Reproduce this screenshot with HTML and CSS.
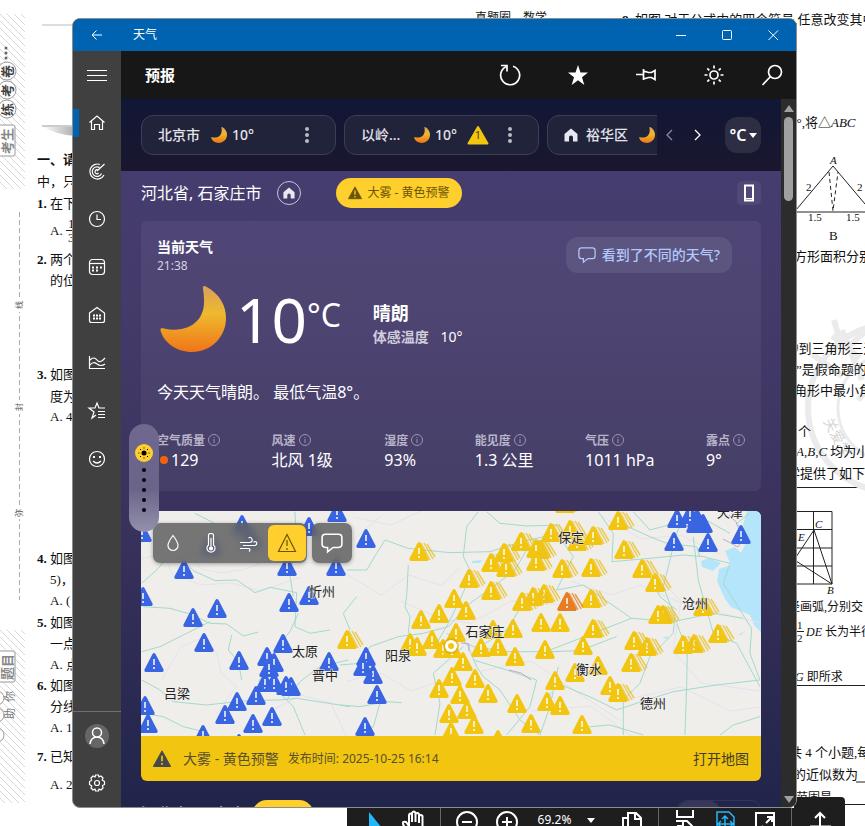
FILE: index.html
```html
<!DOCTYPE html>
<html lang="zh-CN">
<head>
<meta charset="utf-8">
<title>天气</title>
<link rel="stylesheet" href="styles.css">
</head>
<body>
<svg class="paper" width="865" height="826" viewBox="0 0 865 826">
  <defs>
    <pattern id="stripes" width="7" height="7" patternUnits="userSpaceOnUse"><path d="M-1-1L8 8M-1 6L1 8M6-1L8 1" stroke="#d9d9d9" stroke-width="1"/></pattern>
    <linearGradient id="fade" x1="0" x2="1"><stop offset="0" stop-color="#fff"/><stop offset="1" stop-color="#aaa"/></linearGradient>
  </defs>
  <path d="M0 14h25v175H0zM0 630h25v173H0z" fill="url(#stripes)"/>
  <path d="M42 25h34" stroke="#ddd" stroke-width="2"/>
  <path d="M42 126h34v10q-20-1-34-10z" fill="url(#fade)"/>
  <path d="M42 126h34" stroke="#ccc" stroke-width="2"/>
  <g fill="#fff" stroke="#999"><circle cx="7" cy="71" r="9"/><circle cx="7" cy="90" r="9"/><circle cx="7" cy="109" r="9"/><rect x="-6" y="125" width="21" height="31" rx="2"/><rect x="-6" y="651" width="21" height="31" rx="2"/><circle cx="-3" cy="698" r="7"/><circle cx="-3" cy="715" r="7"/><circle cx="-3" cy="735" r="7"/></g>
  <g fill="#666"><circle cx="6" cy="48" r="1.5"/><circle cx="6" cy="53" r="1.5"/><circle cx="6" cy="58" r="1.5"/></g>
  <g class="turned">
    <text transform="translate(12 78) rotate(-90)">卷</text><text transform="translate(12 97) rotate(-90)">考</text><text transform="translate(12 116) rotate(-90)">练</text>
    <text class="gray" transform="translate(12 154) rotate(-90)">考生</text>
    <text class="gray" transform="translate(12 680) rotate(-90)">题目</text>
  </g>
  <g class="margin-note"><text transform="translate(14 719) rotate(-90)">助</text><text transform="translate(14 702) rotate(-90)">你</text></g>
  <path d="M19.500 212v388" stroke="#aaa" stroke-dasharray="5 3"/>
  <path d="M19.500 298v14M19.500 400v14M19.500 505v14" stroke="#fff" stroke-width="3"/>
  <g class="seam"><text transform="translate(22 309) rotate(-90)">线</text><text transform="translate(22 411) rotate(-90)">封</text><text transform="translate(22 517) rotate(-90)">弥</text></g>
  <g class="exam">
    <text x="37" y="164" class="strong">一、请仔细</text><text x="37" y="186">中，只有</text>
    <text x="37" y="208"><tspan class="strong">1.</tspan> 在下列</text><text x="50" y="235">A.</text><text x="68" y="228">1</text><text x="68" y="242">3</text><path d="M66 230.500h10" stroke="#222"/>
    <text x="37" y="264"><tspan class="strong">2.</tspan> 两个</text><text x="50" y="285">的位置</text>
    <text x="37" y="379"><tspan class="strong">3.</tspan> 如图</text><text x="50" y="401">度为</text><text x="50" y="421">A. 40</text>
    <text x="37" y="563"><tspan class="strong">4.</tspan> 如图</text><text x="50" y="584">5)，则</text><text x="50" y="605">A. (</text>
    <text x="37" y="627"><tspan class="strong">5.</tspan> 如图</text><text x="50" y="648">一点</text><text x="50" y="669">A. 点</text>
    <text x="37" y="690"><tspan class="strong">6.</tspan> 如图</text><text x="50" y="711">分线</text><text x="50" y="732">A. 1</text>
    <text x="37" y="761"><tspan class="strong">7.</tspan> 已知</text><text x="50" y="789">A. 2</text>
    <text x="475" y="22" class="small">真题圈　数学</text>
    <text x="622" y="24"><tspan class="strong">8.</tspan> 如图,对于公式中的四个符号,任意改变其中</text>
    <text x="790" y="127">0°,将△<tspan class="it">ABC</tspan></text>
    <text x="794" y="261">方形面积分别</text>
  </g>
  <g class="figure">
    <path d="M796 212H865M796 210L833 166L865 204"/><path d="M829 172L833 211L838 172" stroke-dasharray="4 3"/>
    <path d="M796 487.500H865M796 511.500H832V584H796M796 529.500H832M813.500 511v73M796 548h36M796 566h36M814 530L832 584L796 561M796 557L814 530M796 685.500H865M856 782h9M845 804.500h20"/>
  </g>
  <g class="stamp"><circle cx="892" cy="408" r="84"/><circle cx="892" cy="408" r="54" class="thin"/><path d="M834 320l5 18M812 354l30 22M832 336l28 22M842 330l20 50M850 345l20-18M858 400l12-14"/><text transform="translate(823 421) rotate(62)">关爱学</text></g>
  <g class="exam">
    <text x="830" y="164" class="it tiny">A</text><text x="806" y="191" class="tiny">2</text><text x="857" y="191" class="tiny">2</text><text x="808" y="221" class="tiny">1.5</text><text x="846" y="221" class="tiny">1.5</text><text x="829" y="240">B</text>
    <text x="792" y="353">∂到三角形三边</text><text x="796" y="374">”是假命题的</text><text x="794" y="395">角形中最小角</text><text x="798" y="436">个</text>
    <text x="796" y="456"><tspan class="it">A,B,C</tspan> 均为小</text><text x="787" y="478">学提供了如下面</text>
    <text x="815" y="528" class="it tiny">C</text><text x="798" y="541" class="it tiny">E</text><text x="827" y="594" class="it tiny">B</text>
    <text x="788" y="611" class="small">径画弧,分别交 A</text><text x="797" y="629" class="tiny">1</text><text x="797" y="642" class="tiny">2</text><path d="M796 631.500h8" stroke="#222"/><text x="806" y="636" class="small"><tspan class="it">DE</tspan> 长为半径</text>
    <text x="795" y="681" class="small"><tspan class="it">G</tspan> 即所求</text><text x="789" y="757">共 4 个小题,每</text><text x="793" y="779">的近似数为</text><text x="796" y="802" class="small">范围是</text>
  </g>
</svg>

<svg class="sprite" width="0" height="0">
  <defs>
    <linearGradient id="moonfill" x1="0" y1="0" x2="0" y2="1"><stop offset="0" stop-color="#d9a05a"/><stop offset=".42" stop-color="#efb92e"/><stop offset="1" stop-color="#f07418"/></linearGradient>
    <symbol id="moon" viewBox="0 0 66 66"><path d="M43 3Q42-1 46 .5C60 8 66 20 66 32C66 51 51 66 32 66C17 66 4 57 .5 44.500Q0 41 4 42.500C22 47 45 40 44 14Q44 8 43 3Z" fill="url(#moonfill)"/></symbol>
    <symbol id="dots" viewBox="0 0 6 18"><g fill="#b9bac4"><circle cx="3" cy="3" r="2"/><circle cx="3" cy="9" r="2"/><circle cx="3" cy="15" r="2"/></g></symbol>
    <symbol id="house" viewBox="0 0 14 14"><path d="M7 0.500L13.500 6v7.500H9V9.500a2 2 0 0 0-4 0v4H.500V6Z" fill="#e8e8ee"/></symbol>
    <symbol id="info" viewBox="0 0 12 12"><g fill="none" stroke="#9a93b2"><circle cx="6" cy="6" r="5.500"/><path d="M6 5v4M6 3v1"/></g></symbol>
    <symbol id="bubble" viewBox="0 0 20 20"><path d="M4 2h12q3 0 3 3v6q0 3-3 3h-5l-5 4v-4H4q-3 0-3-3V5q0-3 3-3Z" fill="none" stroke="currentColor" stroke-width="1.400"/></symbol>
    <symbol id="warn" viewBox="0 0 16 16"><path d="M8 1L15.500 14.500H.500Z" fill="currentColor" stroke="currentColor" stroke-linejoin="round"/><path d="M8 5v5M8 11.500v1.500" stroke="var(--mark)" stroke-width="1.500"/></symbol>
  </defs>
</svg>

<div class="viewer-bar">
  <button aria-label="选择"><svg width="24" height="24"><path d="M7 2v20l5-4h8Z" fill="#22b8ff"/></svg></button>
  <button aria-label="手形"><svg width="24" height="24"><path d="M5 22L1 14q-1-3 3-2l3 4V5q1-3 3 0v7V3q2-3 3.500 0v9V4q2-2 3.500 0v9V6q2-2 3.500 0v16" class="ln"/></svg></button>
  <i></i>
  <button aria-label="缩小"><svg width="24" height="24"><circle cx="12" cy="12" r="10" class="ln"/><path d="M7 12h10" class="ln"/></svg></button>
  <button aria-label="放大"><svg width="24" height="24"><circle cx="12" cy="12" r="10" class="ln"/><path d="M7 12h10M12 7v10" class="ln"/></svg></button>
  <button class="zoom">69.2%<span class="caret"></span></button>
  <button aria-label="页面"><svg width="24" height="24"><path d="M8 24V3h8l5 5v16M15 3v6h6M8 8H3v16" class="ln"/></svg></button>
  <i></i>
  <button aria-label="分割"><svg width="24" height="24"><path d="M4 0v7h16V0M3 11h11l5 5v8M5 24V16h5v-5" class="ln"/></svg></button>
  <button aria-label="适合页面" class="on"><svg width="24" height="24"><path d="M4 24V2h12l5 5v17M12 6v12M6 14h14M9 9l3-3 3 3M8 11l-3 3 3 3M17 11l3 3-3 3" class="ln thin"/></svg></button>
  <button aria-label="全屏"><svg width="24" height="24"><path d="M3 24V3h18v21M14 7h5v5M18 8l-5 5M5 16v6M6 20l4-4" class="ln"/></svg></button>
  <i></i>
  <button class="share" aria-label="共享"><svg width="24" height="24"><path d="M12 16V3M7 8l5-5 5 5M2 16.500h20v6" class="ln"/></svg></button>
</div>

<div class="window">
  <header class="titlebar">
    <button class="back" aria-label="返回"><svg width="12" height="12"><path d="M11 6H1M5.500 1.500L1 6l4.500 4.500"/></svg></button>
    <span class="name">天气</span>
    <button aria-label="最小化"><svg width="12" height="12"><path d="M1 6.500h10"/></svg></button>
    <button aria-label="最大化"><svg width="12" height="12"><rect x="1.500" y="1.500" width="9" height="9" rx="1"/></svg></button>
    <button aria-label="关闭"><svg width="12" height="12"><path d="M1.500 1.500l9.500 9.500M11 1.500L1.500 11"/></svg></button>
  </header>
  <div class="body">
    <nav class="rail">
      <button aria-label="菜单"><svg width="20" height="20"><path d="M0 5.500h20M0 10.500h20M0 15.500h20"/></svg></button>
      <button class="current" aria-label="预报"><svg width="20" height="20"><path d="M2.500 9.500L10 3l7.500 6.500M4.500 8.500v8h3v-5h5v5h3v-8"/></svg></button>
      <button aria-label="地图"><svg width="20" height="20"><path d="M13 3.500A7.500 7.500 0 1 0 17 14M12.500 6.500A4.800 4.800 0 1 0 14.500 12.500M11 9a2 2 0 1 0 .5 3M10 10l7.500-7"/></svg></button>
      <button aria-label="每小时预报"><svg width="20" height="20"><circle cx="10" cy="10" r="7.500"/><path d="M10 5.500V10.500h4"/></svg></button>
      <button aria-label="每月预报"><svg width="20" height="20"><rect x="2.500" y="2.500" width="15" height="15" rx="3"/><path d="M3 6.500h14"/><path d="M5 10.500h10M5 13.500h7" stroke-width="2" stroke-dasharray="2 2"/></svg></button>
      <button aria-label="花粉"><svg width="20" height="20"><path d="M2.500 8L10 2.500 17.500 8v7.500q0 2-2 2h-11q-2 0-2-2Z"/><path d="M6 10.500h9M6 13.500h9" stroke-width="2" stroke-dasharray="2 1"/></svg></button>
      <button aria-label="历史天气"><svg width="20" height="20"><path d="M2.500 3v12.500H18M3 7q4-4 7 0t8-2M3 12q3-4 7-1t8 0"/></svg></button>
      <button aria-label="收藏夹"><svg width="20" height="20"><path d="M18 7h-6L10 2 8 7H2l5 4-2 6 4-3M11 10.500h7M11 13.500h7M11 16.500h7"/></svg></button>
      <button aria-label="反馈"><svg width="20" height="20"><circle cx="10" cy="10" r="7.500"/><path d="M6 12q4 4 8 0"/><path d="M6 8h2M12 8h2" stroke-width="2"/></svg></button>
      <span class="fill"></span>
      <button class="account" aria-label="帐户"><svg width="24" height="24"><circle cx="12" cy="12" r="12"/><path d="M5 20q1-7 7-7t7 7"/><circle cx="12" cy="8.500" r="4.500" class="head"/></svg></button>
      <button aria-label="设置"><svg width="20" height="20"><circle cx="10" cy="10" r="2.500"/><path d="M8 4L8.500 2h3L12 4l2-1 2 2-.8 2 2.300 1.500v3L15.500 12.500 16 15l-2 2-2-1-.5 2h-3L8 16l-2 1-2-2 .8-2L2.500 11.500v-3L4.500 7.500 4 5l2-2Z"/></svg></button>
    </nav>
    <div class="page">
      <div class="appbar">
        <h1>预报</h1>
        <button aria-label="刷新"><svg width="24" height="24"><path d="M15 3.200a9.500 9.500 0 1 1-7 .5M3 2.500h6v6"/></svg></button>
        <button aria-label="收藏"><svg width="24" height="24"><path d="M12 2l2.500 7.500H22l-6 4.700 2.300 7.800L12 17.300 5.700 22 8 14.200 2 9.500h7.500Z" fill="#fff" stroke="none"/></svg></button>
        <button aria-label="固定"><svg width="24" height="24"><path d="M2 11.500h7M9.500 6v11M9.500 8l5 1.500h3l3.500-2v9l-3.500-2h-3l-5 1.500" /></svg></button>
        <button aria-label="主题"><svg width="24" height="24"><circle cx="12" cy="12" r="4"/><path d="M12 2.500v3M12 18.500v3M2.500 12h3M18.500 12h3M5.300 5.300l2 2M16.700 16.700l2 2M5.300 18.700l2-2M16.700 7.300l2-2"/></svg></button>
        <button class="search" aria-label="搜索"><svg width="24" height="24"><circle cx="15" cy="9" r="6.500"/><path d="M10.500 13.500L2.500 22"/></svg></button>
      </div>
      <div class="scroller">
        <main>
          <section class="places">
            <div class="chips">
              <div class="chip"><span class="city">北京市</span><svg class="sm-moon"><use href="#moon"/></svg><span class="deg">10°</span><button aria-label="更多"><svg width="6" height="18"><use href="#dots"/></svg></button></div>
              <div class="chip"><span class="city">以岭...</span><svg class="sm-moon"><use href="#moon"/></svg><span class="deg">10°</span><span class="count"><svg width="22" height="20"><path d="M11 2L20.500 18.500H1.500Z"/></svg><b>1</b></span><button aria-label="更多"><svg width="6" height="18"><use href="#dots"/></svg></button></div>
              <div class="chip"><svg class="sm-house"><use href="#house"/></svg><span class="city">裕华区</span><svg class="sm-moon"><use href="#moon"/></svg></div>
            </div>
            <button class="arrow dim" aria-label="上一个"><svg width="8" height="12"><path d="M7 1L2 6l5 5"/></svg></button>
            <button class="arrow" aria-label="下一个"><svg width="8" height="12"><path d="M1 1l5 5-5 5"/></svg></button>
            <button class="unit">°C<span class="caret"></span></button>
          </section>
          <section class="location">
            <h2>河北省, 石家庄市</h2>
            <button class="home" aria-label="主位置"><svg width="12" height="12"><use href="#house"/></svg></button>
            <button class="alert"><svg width="14" height="14"><use href="#warn"/></svg>大雾 - 黄色预警</button>
            <button class="phone" aria-label="手机"><svg width="12" height="18"><path d="M2 1.500h8v15H2Z"/><path d="M2 14.500h8" stroke-width="1"/></svg></button>
          </section>
          <section class="now">
            <div class="top">
              <div><h3>当前天气</h3><time>21:38</time></div>
              <button class="feedback"><svg width="18" height="18"><use href="#bubble"/></svg>看到了不同的天气?</button>
            </div>
            <div class="current-row">
              <svg class="big-moon"><use href="#moon"/></svg>
              <span class="temp">10</span><span class="scale">°C</span>
              <div class="cond"><strong>晴朗</strong><span>体感温度 <em>10°</em></span></div>
            </div>
            <p>今天天气晴朗。 最低气温8°。</p>
            <dl>
              <div><dt>空气质量<svg><use href="#info"/></svg></dt><dd><i class="aqi"></i>129</dd></div>
              <div><dt>风速<svg><use href="#info"/></svg></dt><dd>北风 1级</dd></div>
              <div><dt>湿度<svg><use href="#info"/></svg></dt><dd>93%</dd></div>
              <div><dt>能见度<svg><use href="#info"/></svg></dt><dd>1.3 公里</dd></div>
              <div><dt>气压<svg><use href="#info"/></svg></dt><dd>1011 hPa</dd></div>
              <div><dt>露点<svg><use href="#info"/></svg></dt><dd>9°</dd></div>
            </dl>
          </section>
          <section class="map">
            <svg class="canvas" viewBox="0 0 620 225" preserveAspectRatio="xMidYMid slice">
              <defs>
                <path id="tri" d="M-1.500-9Q0-11 1.500-9L9.500 6.500Q10 9 8 9H-8Q-10 9-9.500 6.500Z"/>
                <path id="ex" d="M0-4v6M0 4v2" stroke="#fff" stroke-width="1.500" fill="none"/>
                <g id="b"><use href="#tri" fill="#3964e2"/><use href="#ex"/></g>
                <g id="y"><use href="#tri" fill="#f2c511"/><use href="#ex"/></g>
                <path id="bars" d="M2-9L11 8M5-9L14 7M8-8L16 5" stroke-width="1.500" opacity=".75"/>
                <g id="h"><use href="#bars" stroke="#ecc021"/><use href="#y"/></g>
                <g id="o"><use href="#bars" stroke="#e67d22"/><use href="#tri" fill="#e67d22"/><use href="#ex"/></g>
              </defs>
              <rect width="620" height="225" fill="#efeeeb"/>
              <g fill="#b4e5fb"><path d="M606 0H620V121L613 114 609 104 590 96 584 88 576 70 578 58 590 54 584 40 594 36 600 42 606 30 602 14Z"/><path d="M560 50l8-3 12 5-8 8-11-4ZM331 50l10-1-2 3-8 0ZM521 127l6-2-1 3ZM597 124l7-4-4 4ZM407 184l4-4-2 7Z"/></g>
              <g class="minor">
                <path d="M0 48L24 42 44 34 60 58 80 62 105 58 130 48 170 52 210 30 240 5M24 42L30 62 60 74 90 72 120 80 160 66M80 162L76 142 58 128 40 136 20 170M80 162L96 175 74 205M130 200L160 184 190 192 205 225M200 60L240 84 268 64 300 74 318 58M212 6L250 14 280 0M206 170L240 162 270 180 300 170M260 90L300 108 330 112 370 90 420 94M340 160L390 150 440 184 480 210M430 70L470 84 500 74 540 92 620 112M500 50L540 90 532 140 560 172 620 180M460 5L500 28 540 24 580 44M480 190L540 176 590 200 620 196M390 200L450 195 490 225"/>
              </g>
              <g class="roads">
                <g transform="scale(.3333) translate(-33 -33)"><path d="M195 40L250 68 300 100M35 250L85 205 130 150 190 212 255 242 320 240 375 278 420 262 500 278 495 380 540 400 600 390M40 320L120 325 180 342 240 370 290 372 340 408 385 396M35 455L90 440 160 405 240 365M305 405L295 450 325 485 335 540M495 35L500 150 478 215 490 290M385 545L420 500 440 440 480 395 505 340M440 570L490 620 525 705M35 540L90 570 130 605 230 615 350 602 450 600 500 595 660 620M40 640L100 650 160 680 220 695M470 600L510 545 570 500 655 480"/></g>
                <g transform="scale(.3333) translate(597 -33)"><path d="M20 210L80 210 110 160 135 120 205 145 330 158 450 155 545 125 655 100M440 35L480 70 560 78 660 75M415 35L380 80 370 170 395 220 360 300 325 370 290 430M200 290L195 320 210 350 205 400M205 195L200 290M0 495L60 490 90 440 175 410 250 400 325 380 390 310 460 260 525 210 560 150M0 615L60 620 140 605 185 608M50 290L10 340 30 390M320 400L400 440 500 455 655 455M380 430L410 500 430 530 480 570 540 660 600 705M370 440L280 520 300 610 285 705M400 480L500 510 590 540 570 620 500 705M655 500L630 620 600 705M120 610L100 680 70 700M550 310L500 390 420 440"/></g>
                <g transform="scale(.3333) translate(1227 -33)"><path d="M145 35L190 100 186 185 300 175 400 165 460 170 540 190M190 60L300 110 350 130 440 140 450 170M0 70L70 170 20 270 100 255 245 355 370 365 490 340 580 355M245 355L0 450M410 35L380 100 340 260 375 350 370 400 300 470 270 550 220 600 220 705M0 455L90 452 160 425 200 410M250 35L300 90 450 50 540 100M430 110L445 240 490 400 560 430 630 560M540 190L520 250 570 330 605 385 600 460 630 540M380 370L412 450 410 560 405 705M0 540L130 595 200 630 290 600 370 575 500 555 630 540M120 680L180 675 280 705M510 705L550 675 630 650M280 190L330 290 380 330M600 40L560 70 580 130"/></g>
              </g>
              <path d="M368 159l12 3 10 7M320 132l8 1v7M595 12l10 12-8 12-15-8M596 12l-8-8" fill="none" stroke="#c4a4d2"/>
              <g class="pins">
                <use href="#b" x="43" y="59"/><use href="#b" x="196" y="2"/><use href="#b" x="101" y="14"/><use href="#b" x="168" y="16"/><use href="#b" x="2" y="86"/><use href="#b" x="1" y="22"/><use href="#b" x="146" y="56"/><use href="#b" x="195" y="56"/><use href="#b" x="76" y="98"/><use href="#b" x="52" y="107"/><use href="#b" x="148" y="92"/><use href="#b" x="168" y="85"/><use href="#b" x="63" y="132"/><use href="#b" x="13" y="152"/><use href="#b" x="98" y="150"/><use href="#b" x="142" y="133"/><use href="#b" x="188" y="151"/><use href="#b" x="126" y="146"/><use href="#b" x="133" y="152"/><use href="#b" x="128" y="157"/><use href="#b" x="124" y="172"/><use href="#b" x="133" y="172"/><use href="#b" x="150" y="176"/><use href="#b" x="145" y="175"/><use href="#b" x="115" y="185"/><use href="#b" x="96" y="191"/><use href="#b" x="84" y="204"/><use href="#b" x="112" y="213"/><use href="#b" x="131" y="206"/><use href="#b" x="4" y="195"/><use href="#b" x="7" y="213"/><use href="#b" x="62" y="224"/><use href="#b" x="98" y="233"/><use href="#b" x="70" y="35"/><use href="#b" x="110" y="28"/>
                <use href="#b" x="225" y="28"/><use href="#b" x="225" y="146"/><use href="#b" x="232" y="164"/><use href="#b" x="222" y="156"/><use href="#b" x="236" y="184"/><use href="#b" x="224" y="216"/>
                <use href="#b" x="556" y="12"/><use href="#tri" fill="#3964e2" x="562" y="13"/><use href="#tri" fill="#3964e2" x="556" y="8"/><use href="#b" x="536" y="8"/><use href="#b" x="549" y="4"/><use href="#tri" fill="#3964e2" x="555" y="13"/><use href="#b" x="533" y="31"/><use href="#b" x="567" y="32"/><use href="#b" x="600" y="24"/>
                <use href="#h" x="278" y="41"/><use href="#h" x="206" y="129"/><use href="#h" x="328" y="68"/><use href="#h" x="380" y="31"/><use href="#h" x="363" y="42"/><use href="#h" x="350" y="52"/><use href="#h" x="365" y="57"/><use href="#h" x="399" y="39"/><use href="#h" x="395" y="38"/><use href="#h" x="395" y="51"/><use href="#h" x="410" y="22"/><use href="#h" x="350" y="80"/><use href="#h" x="403" y="83"/><use href="#h" x="392" y="86"/><use href="#h" x="381" y="91"/>
                <use href="#y" x="313" y="88"/><use href="#y" x="325" y="100"/><use href="#y" x="298" y="103"/><use href="#y" x="280" y="109"/><use href="#y" x="352" y="119"/><use href="#y" x="372" y="118"/><use href="#y" x="400" y="112"/><use href="#y" x="315" y="122"/><use href="#y" x="291" y="129"/><use href="#y" x="269" y="132"/><use href="#y" x="276" y="136"/><use href="#y" x="302" y="138"/><use href="#y" x="311" y="138"/><use href="#y" x="340" y="137"/><use href="#y" x="357" y="136"/><use href="#y" x="374" y="146"/><use href="#y" x="404" y="139"/><use href="#y" x="322" y="151"/><use href="#y" x="311" y="166"/><use href="#y" x="298" y="178"/><use href="#y" x="334" y="168"/><use href="#y" x="319" y="184"/><use href="#y" x="347" y="183"/><use href="#y" x="326" y="199"/><use href="#y" x="308" y="203"/><use href="#y" x="333" y="214"/><use href="#y" x="310" y="221"/><use href="#y" x="357" y="229"/><use href="#y" x="376" y="193"/><use href="#y" x="390" y="213"/><use href="#y" x="414" y="170"/><use href="#y" x="406" y="191"/><use href="#y" x="419" y="195"/>
                <use href="#h" x="424" y="-7"/><use href="#h" x="477" y="10"/><use href="#h" x="429" y="19"/><use href="#h" x="436" y="31"/><use href="#h" x="452" y="25"/><use href="#h" x="483" y="39"/><use href="#h" x="421" y="58"/><use href="#h" x="450" y="57"/><use href="#h" x="501" y="58"/><use href="#h" x="514" y="72"/><use href="#h" x="450" y="88"/><use href="#o" x="426" y="91"/><use href="#h" x="522" y="104"/><use href="#h" x="517" y="104"/><use href="#y" x="419" y="112"/><use href="#h" x="452" y="118"/><use href="#y" x="442" y="135"/><use href="#h" x="506" y="136"/><use href="#h" x="493" y="130"/><use href="#h" x="490" y="152"/><use href="#h" x="553" y="133"/><use href="#h" x="542" y="134"/><use href="#h" x="577" y="123"/><use href="#h" x="562" y="96"/><use href="#y" x="457" y="155"/><use href="#y" x="434" y="162"/><use href="#y" x="469" y="175"/><use href="#h" x="477" y="182"/><use href="#y" x="441" y="214"/>
              </g>
              <circle cx="310" cy="135" r="8" fill="#d9a90c" opacity=".6"/><circle cx="310" cy="135" r="6" fill="#fff"/><circle cx="310" cy="135" r="3" fill="#f2c511"/>
              <g class="towns"><text x="181" y="85">忻州</text><text x="164" y="145">太原</text><text x="184" y="169">晋中</text><text x="36" y="187">吕梁</text><text x="257" y="149">阳泉</text><text x="344" y="125">石家庄</text><text x="430" y="31">保定</text><text x="554" y="97">沧州</text><text x="448" y="163">衡水</text><text x="512" y="197">德州</text><text x="589" y="6">天津</text></g>
            </svg>
            <div class="tools">
              <div>
                <button aria-label="降水"><svg width="20" height="20"><path d="M10 2.500Q5 9 5 12.500a5 5 0 0 0 10 0Q15 9 10 2.500Z"/></svg></button>
                <button aria-label="温度"><svg width="20" height="20"><path d="M7.500 12V2q0-1.500 2.500-1.500T12.500 2v10a4 4 0 1 1-5 0ZM10 5v10" /><circle cx="10" cy="15.500" r="1.500" fill="#fff"/></svg></button>
                <button aria-label="风"><svg width="20" height="20"><path d="M1 9.500h10q3-1 2-3.500t-3.500-1M4 12.500h12q2.500-1 1.500-3t-3 0M1 15.500h9q2 1 0 3"/></svg></button>
                <button class="on" aria-label="预警"><svg width="20" height="20"><path d="M10 1.500L18.500 18.500H1.500ZM10 7v6M10 15v2"/></svg></button>
              </div>
              <div><button aria-label="评论"><svg width="22" height="22"><use href="#bubble"/></svg></button></div>
            </div>
            <div class="bar"><svg width="18" height="18"><use href="#warn"/></svg><span>大雾 - 黄色预警</span><small>发布时间: 2025-10-25 16:14</small><a href="#">打开地图</a></div>
          </section>
          <section class="next"><h2>河北省, 石家庄市</h2><span class="peek"></span><span class="toggle"><i></i></span></section>
        </main>
        <div class="scrollbar"><span class="up"></span><span class="thumb"></span><span class="down"></span></div>
      </div>
    </div>
  </div>
</div>
<div class="float"><svg width="18" height="18"><circle cx="9" cy="9" r="9" fill="#ffcf2d"/><circle cx="9" cy="9" r="2.500"/><path d="M9 3.500v1M9 13.500v1M3.500 9h1M13.500 9h1M5 5l1 1M12 12l1 1M5 13l1-1M12 6l1-1" stroke="#000"/></svg><i></i><i></i><i></i><i></i><i></i></div>
</body>
</html>
```
FILE: styles.css
```css
* { box-sizing: border-box; margin: 0; padding: 0; }
html, body { height: 100%; }
body { position: relative; overflow: hidden; background: #fff; color: #fff; font: 14px/20px "Noto Sans", "Noto Sans CJK SC", sans-serif; }
button { border: 0; background: none; color: inherit; font: inherit; display: flex; align-items: center; justify-content: center; flex: none; }
svg { flex: none; display: block; }
.sprite { position: absolute; }

/* document behind the window */
.paper { position: absolute; left: 0; top: 0; }
.exam { fill: #111; font: 13px "Liberation Serif", "Noto Sans CJK SC", serif; }
.exam .strong { font-weight: 700; }
.exam .it { font-style: italic; }
.exam .small { font-size: 12px; }
.exam .tiny { font-size: 11px; }
.turned { font: 700 13px "Noto Sans CJK SC", sans-serif; fill: #444; }
.turned .gray { fill: #888; }
.margin-note { font: 11px "Noto Sans CJK SC", sans-serif; fill: #777; }
.seam { font: 8px "Noto Sans CJK SC", sans-serif; fill: #555; }
.figure { fill: none; stroke: #222; }
.stamp { fill: none; stroke: #ebebeb; stroke-width: 6; }
.stamp .thin { stroke-width: 3; }
.stamp text { fill: #d5d5d5; stroke: none; font: 14px "Noto Sans CJK SC", sans-serif; }

/* document viewer toolbar */
.viewer-bar { position: absolute; left: 347px; right: 20px; bottom: 0; height: 18px; padding-left: 7px; display: flex; background: #1e1e1e; }
.viewer-bar button { width: 40px; height: 24px; margin-top: 2px; }
.viewer-bar i { width: 1px; margin: 0 6px; background: #666; }
.viewer-bar .zoom { width: 85px; height: 20px; font-size: 12px; gap: 16px; padding-right: 6px; }
.viewer-bar .share { flex: 1; height: 29px; margin: -11px 0 0 -4px; background: #1e1e1e; border-radius: 4px 4px 0 0; }
.viewer-bar .share svg { margin-top: 20px; }
.viewer-bar .on { color: #22b8ff; }
.ln { fill: none; stroke: currentColor; stroke-width: 2; }
.ln.thin { stroke-width: 1.5; }
.caret { border: 4px solid transparent; border-top: 5px solid #fff; border-bottom: 0; }

/* window frame */
.window { position: absolute; inset: 18px 68px 18px 72px; border: 1px solid #8d8d8d; border-radius: 8px; overflow: hidden; display: flex; flex-direction: column; background: #404040; }
.titlebar { display: flex; height: 32px; flex: none; align-items: center; background: #0063b1; }
.titlebar button { width: 46px; height: 32px; }
.titlebar .back { width: 48px; }
.titlebar .name { flex: 1; padding-left: 12px; font-size: 12px; }
.titlebar svg, .rail svg, .appbar svg, .arrow svg, .tools svg, .phone svg { fill: none; stroke: #fff; }
.body { display: flex; flex: 1; min-height: 0; }
.rail { width: 48px; flex: none; display: flex; flex-direction: column; }
.rail button { height: 48px; flex: none; }
.rail svg { stroke-width: 1.2; }
.rail .current { position: relative; }
.rail .current::before { content: ""; position: absolute; left: 0; top: 10px; width: 6px; height: 28px; background: #0063b1; }
.rail .fill { flex: 1; }
.rail .account { border-top: 1px solid #6e6e6e; }
.account circle:first-child { fill: #666; stroke: none; }
.account path, .account .head { fill: #666; stroke-width: 1.5; }
.page { flex: 1; min-width: 0; display: flex; flex-direction: column; }
.appbar { display: flex; height: 48px; flex: none; align-items: center; background: #171717; }
.appbar h1 { flex: 1; padding-left: 24px; font-size: 15px; }
.appbar button { width: 68px; height: 48px; }
.appbar svg { stroke-width: 1.7; }
.appbar .search { width: 48px; }
.scroller { flex: 1; min-height: 0; display: flex; }
main { flex: 1; min-width: 0; overflow: hidden; background: linear-gradient(#463e71, #443b6b 200px, #3b335e 400px, #22254b 700px); }

/* scroll bar */
.scrollbar { width: 15px; flex: none; background: #2c2c2c; display: flex; flex-direction: column; align-items: center; padding: 6px 0 4px; }
.up { border: 5px solid transparent; border-bottom: 7px solid #a0a0a0; border-top: 0; }
.thumb { width: 9px; height: 84px; margin-top: 5px; border-radius: 5px; background: #a0a0a0; }
.down { margin-top: auto; border: 5px solid transparent; border-top: 7px solid #a0a0a0; border-bottom: 0; }

/* saved places */
.places { display: flex; height: 72px; align-items: center; padding: 0 20px; background: linear-gradient(#111736, #1a172e); }
.chips { display: flex; flex: 1; min-width: 0; gap: 8px; overflow: hidden; }
.chip { width: 195px; height: 40px; flex: none; display: flex; align-items: center; padding: 0 14px 0 16px; border: 1px solid #3d3f56; border-radius: 12px; background: #21233b; color: #e4e4ea; font-weight: 500; }
.city { width: 53px; }
.sm-moon { width: 16px; height: 16px; margin-right: 5px; }
.sm-house { width: 14px; height: 14px; margin-right: 8px; }
.deg { width: 32px; }
.chip button { width: 28px; height: 28px; margin-left: auto; }
.count { position: relative; width: 22px; height: 20px; }
.count path { fill: #f2c511; stroke: #f2c511; stroke-width: 2; stroke-linejoin: round; }
.count b { position: absolute; inset: 0; text-align: center; font-size: 11px; font-weight: 400; color: #54460a; }
.arrow { width: 30px; height: 30px; margin-right: -1px; }
.arrow:nth-child(2) { margin-left: -3px; }
.arrow svg { stroke-width: 1.3; }
.dim { opacity: .5; }
.unit { width: 36px; height: 36px; margin-left: 13px; gap: 2px; border-radius: 12px; background: #2d2d43; font-size: 16px; font-weight: 600; }

/* location line */
.location { display: flex; align-items: center; height: 50px; padding: 7px 20px 13px; }
h2 { font-size: 16px; font-weight: 400; }
.home { width: 24px; height: 24px; margin-left: 16px; border: 1px solid #c9c6d8; border-radius: 50%; }
.alert { height: 30px; margin-left: 35px; padding: 0 12px; gap: 5px; border-radius: 15px; background: #ffcf2d; color: #6b5600; --mark: #ffcf2d; font-size: 12px; }
.phone { width: 24px; height: 24px; margin-left: auto; border-radius: 5px; background: #514879; }
.phone svg { stroke-width: 2; }

/* current weather */
.now { margin: 0 20px; padding: 16px 16px 20px; border-radius: 6px; background: rgba(255, 255, 255, .055); }
.top { display: flex; justify-content: space-between; }
h3 { font-size: 14px; }
time { display: block; font-size: 12px; line-height: 18px; color: #d6d3e0; }
.feedback { height: 36px; margin-right: 13px; padding: 0 12px; gap: 6px; border-radius: 12px; background: #5c5580; color: #b2c8fb; font-weight: 500; }
.current-row { display: flex; height: 66px; margin: 11px 0 28px; padding-left: 3px; align-items: center; }
.big-moon { width: 66px; height: 66px; }
.temp { margin-left: 10px; font-size: 62px; line-height: 66px; }
.scale { font-size: 32px; line-height: 40px; align-self: flex-start; margin-top: 9px; }
.cond { margin-left: 32px; padding-top: 12px; }
.cond strong { display: block; font-size: 18px; line-height: 24px; }
.cond span { display: block; color: #d0ccdb; font-weight: 600; line-height: 24px; }
.cond em { margin-left: 8px; font-style: normal; font-weight: 400; color: #fff; }
.now p { font-size: 16px; line-height: 24px; }
dl { display: flex; justify-content: space-between; margin-top: 28px; }
dt { display: flex; gap: 3px; font-size: 12px; line-height: 18px; font-weight: 600; color: #b9b4c8; }
dt svg { width: 12px; height: 12px; margin-top: 2px; }
dd { font-size: 16px; line-height: 21px; white-space: nowrap; }
.aqi { display: inline-block; width: 8px; height: 8px; margin: 0 3px 2px; border-radius: 50%; background: #f7630c; }

/* alert map */
.map { position: relative; margin: 20px 20px 0; border-radius: 6px; overflow: hidden; }
.canvas { width: 100%; height: 225px; }
.roads { fill: none; stroke: #a3d9cc; stroke-width: 3; stroke-linejoin: round; }
.minor { fill: none; stroke: #e4e1ec; stroke-linejoin: round; }
.towns { fill: #222; font: 13px "Noto Sans CJK SC", sans-serif; text-anchor: middle; paint-order: stroke; stroke: #efeeeb; stroke-width: 1px; }
.tools { position: absolute; left: 12px; top: 12px; display: flex; gap: 5px; }
.tools div { display: flex; padding: 2px 1px; border-radius: 7px; background: rgba(90, 90, 90, .82); backdrop-filter: blur(4px); box-shadow: 0 1px 4px rgba(0, 0, 0, .35); }
.tools button { width: 38px; height: 36px; }
.tools svg { stroke-width: 1.2; }
.tools .on { border-radius: 6px; background: #ffcf2d; }
.tools .on svg { stroke: #6b5600; }
.bar { display: flex; align-items: center; height: 45px; padding: 0 12px; background: #f2c511; color: #57502d; --mark: #f2c511; }
.bar svg { color: #494949; }
.bar span { margin-left: 12px; }
.bar small { margin-left: 9px; font-size: 12px; }
.bar a { margin-left: auto; color: #443e22; text-decoration: none; }

/* following section, cut by the fold */
.next { display: flex; align-items: flex-start; padding: 19px 20px; }
.next h2 { width: 111px; line-height: 28px; white-space: nowrap; overflow: hidden; }
.peek { width: 62px; height: 30px; border-radius: 15px; background: #ffcf2d; }
.toggle { width: 84px; height: 30px; margin-left: auto; border: 1px solid #33345a; border-radius: 10px; }
.toggle i { display: block; width: 42px; height: 28px; border-radius: 10px; background: #37375a; }

/* floating pill */
.float { position: absolute; left: 129px; top: 424px; width: 30px; height: 108px; padding-top: 20px; display: flex; flex-direction: column; align-items: center; gap: 6px; border-radius: 15px; background: linear-gradient(#6f688f, #6b6489 60%, #9391ad); }
.float i { width: 4px; height: 4px; border-radius: 50%; background: #000; }
```
